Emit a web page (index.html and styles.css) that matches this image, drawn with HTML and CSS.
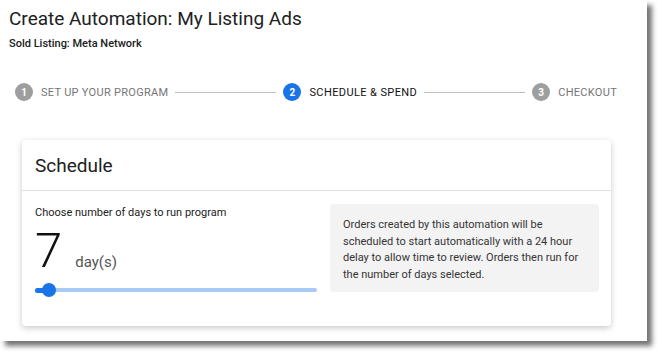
FILE: index.html
```html
<!DOCTYPE html>
<html lang="en">
<head>
    <meta charset="UTF-8">
    <meta name="viewport" content="width=device-width, initial-scale=1.0">
    <title>Create Automation: My Listing Ads</title>
    <link rel="stylesheet" href="styles.css">
</head>
<body>
    <div class="frame">
        <h1 class="title">Create Automation: My Listing Ads</h1>
        <div class="subtitle">Sold Listing: Meta Network</div>

        <div class="stepper">
            <div class="step">
                <span class="step-num">1</span>
                <span class="step-label">Set up your program</span>
            </div>
            <div class="step-line"></div>
            <div class="step active">
                <span class="step-num">2</span>
                <span class="step-label">Schedule &amp; Spend</span>
            </div>
            <div class="step-line"></div>
            <div class="step">
                <span class="step-num">3</span>
                <span class="step-label">Checkout</span>
            </div>
        </div>

        <div class="card">
            <div class="card-header">Schedule</div>
            <div class="card-body">
                <div class="days">
                    <div class="days-label">Choose number of days to run program</div>
                    <div class="days-value">
                        <span class="days-num">7</span>
                        <span class="days-unit">day(s)</span>
                    </div>
                    <div class="slider">
                        <div class="slider-fill"></div>
                        <div class="slider-thumb"></div>
                    </div>
                </div>
                <div class="info">
                    Orders created by this automation will be scheduled to start automatically with a 24 hour delay to allow time to review. Orders then run for the number of days selected.
                </div>
            </div>
        </div>
    </div>
</body>
</html>
```

FILE: styles.css
```css
body {
    margin: 0;
    padding-bottom: 16px;
    background: #fff;
    font-family: Roboto, "Liberation Sans", Arial, sans-serif;
    color: #212121;
}
.frame {
    width: 647px;
    height: 341px;
    box-sizing: border-box;
    padding-top: 7px;
    background: #fff;
    box-shadow: 5px 5px 5px rgba(0,0,0,0.55);
}
.title {
    margin: 0 0 0 9px;
    font-size: 19px;
    line-height: 24px;
    font-weight: 400;
    color: #212121;
}
.subtitle {
    margin: 6px 0 0 9px;
    font-size: 11px;
    line-height: 14px;
    font-weight: 500;
    color: #212121;
}
.stepper {
    display: flex;
    align-items: center;
    margin-top: 32px;
    padding: 0 30px 0 15px;
    height: 18px;
}
.step {
    display: flex;
    align-items: center;
    gap: 8px;
}
.step-num {
    width: 18px;
    height: 18px;
    border-radius: 50%;
    background: #9e9e9e;
    color: #fff;
    font-size: 10px;
    font-weight: 700;
    display: flex;
    align-items: center;
    justify-content: center;
}
.step-label {
    font-size: 11px;
    text-transform: uppercase;
    letter-spacing: 0.3px;
    color: #757575;
}
.step.active .step-num {
    background: #1a73e8;
}
.step.active .step-label {
    color: #111;
    letter-spacing: 0.4px;
}
.step-line {
    flex: 1;
    height: 1px;
    background: #bdbdbd;
    margin: 0 7px;
}
.card {
    margin: 39px 0 0 22px;
    width: 589px;
    height: 186px;
    background: #fff;
    border-radius: 4px;
    box-shadow: 0 2px 6px rgba(0,0,0,0.22);
}
.card-header {
    height: 51px;
    box-sizing: border-box;
    padding: 14px 13px 0;
    font-size: 19px;
    line-height: 24px;
    border-bottom: 1px solid #e0e0e0;
}
.card-body {
    display: grid;
    grid-template-columns: 282px 269px;
    gap: 13px;
    padding: 13px 12px 0 13px;
}
.days-label {
    margin-top: 2px;
    font-size: 11px;
    line-height: 14px;
    color: #212121;
}
.days-value {
    display: flex;
    align-items: baseline;
    gap: 13px;
    height: 52px;
    margin-top: 5px;
}
.days-num {
    font-size: 49px;
    line-height: 52px;
    font-weight: 300;
    color: #111;
}
.days-unit {
    font-size: 15px;
    color: #555;
}
.slider {
    position: relative;
    height: 4px;
    margin-top: 11px;
    background: #a8cbf5;
    border-radius: 2px;
}
.slider-fill {
    width: 14px;
    height: 5px;
    margin-top: -0.5px;
    background: #1a73e8;
    border-radius: 3px;
}
.slider-thumb {
    position: absolute;
    left: 7px;
    top: -5px;
    width: 14px;
    height: 14px;
    border-radius: 50%;
    background: #1a73e8;
}
.info {
    background: #f3f3f3;
    border-radius: 4px;
    padding: 13px 13px 12px;
    height: 88px;
    box-sizing: border-box;
    font-size: 11px;
    line-height: 16.5px;
    color: #333;
}
```
